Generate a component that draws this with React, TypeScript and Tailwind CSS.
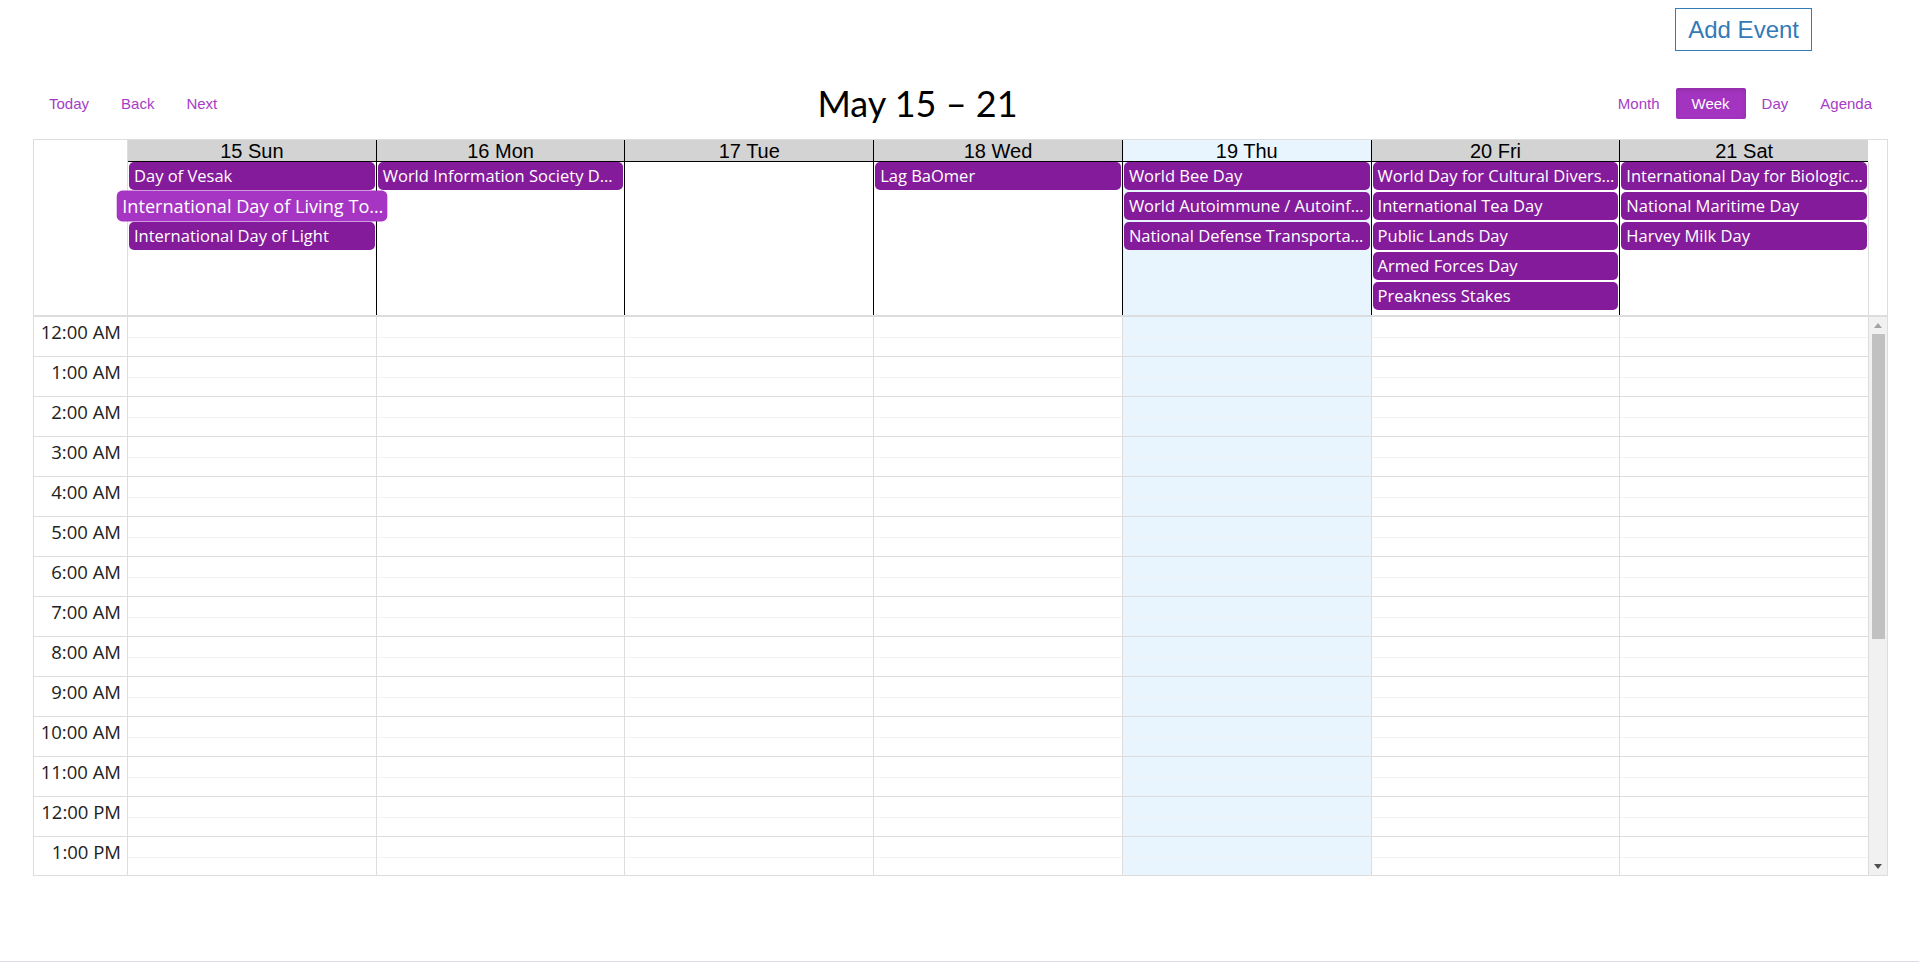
import React from 'react'

interface CalEvent {
  title: string
  label?: string
}

interface DayColumn {
  label: string
  today?: boolean
  events: CalEvent[]
}

// label = text as the calendar shows it once clipped to the cell
const days: DayColumn[] = [
  {
    label: '15 Sun',
    events: [
      { title: 'Day of Vesak' },
      { title: 'International Day of Living Together in Peace', label: 'International Day of Living To…' },
      { title: 'International Day of Light' },
    ],
  },
  {
    label: '16 Mon',
    events: [{ title: 'World Information Society Day', label: 'World Information Society D…' }],
  },
  { label: '17 Tue', events: [] },
  { label: '18 Wed', events: [{ title: 'Lag BaOmer' }] },
  {
    label: '19 Thu',
    today: true,
    events: [
      { title: 'World Bee Day' },
      { title: 'World Autoimmune / Autoinflammatory Arthritis Day', label: 'World Autoimmune / Autoinf…' },
      { title: 'National Defense Transportation Day', label: 'National Defense Transporta…' },
    ],
  },
  {
    label: '20 Fri',
    events: [
      { title: 'World Day for Cultural Diversity for Dialogue and Development', label: 'World Day for Cultural Divers…' },
      { title: 'International Tea Day' },
      { title: 'Public Lands Day' },
      { title: 'Armed Forces Day' },
      { title: 'Preakness Stakes' },
    ],
  },
  {
    label: '21 Sat',
    events: [
      { title: 'International Day for Biological Diversity', label: 'International Day for Biologic…' },
      { title: 'National Maritime Day' },
      { title: 'Harvey Milk Day' },
    ],
  },
]

const hours = [
  '12:00 AM',
  '1:00 AM',
  '2:00 AM',
  '3:00 AM',
  '4:00 AM',
  '5:00 AM',
  '6:00 AM',
  '7:00 AM',
  '8:00 AM',
  '9:00 AM',
  '10:00 AM',
  '11:00 AM',
  '12:00 PM',
  '1:00 PM',
]

const highlighted = 'International Day of Living Together in Peace'

function ToolbarButton({ label, active }: { label: string; active?: boolean }) {
  return (
    <button
      className={
        active
          ? 'px-4 py-[7px] text-[15px] leading-[17px] bg-[#a234bf] text-white rounded-[2px] shadow-[inset_0_2px_4px_rgba(0,0,0,0.12)]'
          : 'px-4 py-[7px] text-[15px] leading-[17px] text-[#a63cc6]'
      }
    >
      {label}
    </button>
  )
}

function AllDayEvent({ event }: { event: CalEvent }) {
  const isHot = event.title === highlighted
  return (
    <div
      className={
        isHot
          ? 'relative z-10 h-[28px] mb-[2px] scale-110 rounded-[5px] bg-[#a535c2] px-[5px] text-white text-[16.5px] leading-[28px] whitespace-nowrap overflow-hidden'
          : 'h-[28px] mb-[2px] rounded-[5px] bg-[#841b9b] px-[5px] text-white text-[16.5px] leading-[28px] whitespace-nowrap overflow-hidden'
      }
      title={event.title}
    >
      {event.label ?? event.title}
    </div>
  )
}

export default function App() {
  return (
    <div className="h-[962px] flex flex-col bg-white overflow-hidden font-['Liberation_Sans',Arial,sans-serif]">
      <div className="flex justify-end pt-[8px] pr-[107px]">
        <button className="border border-[#337ab7] px-3 py-[7px] text-[24px] leading-[27px] text-[#337ab7]">
          Add Event
        </button>
      </div>

      <div className="ml-[33px] w-[1855px] mt-[27px] mb-[11px] h-[50px] flex items-center">
        <div className="flex">
          <ToolbarButton label="Today" />
          <ToolbarButton label="Back" />
          <ToolbarButton label="Next" />
        </div>
        <div className="flex-1 text-center text-[36px] leading-[50px] text-black font-['Lato',sans-serif]">
          May 15 – 21
        </div>
        <div className="flex">
          <ToolbarButton label="Month" />
          <ToolbarButton label="Week" active />
          <ToolbarButton label="Day" />
          <ToolbarButton label="Agenda" />
        </div>
      </div>

      <div className="ml-[33px] w-[1855px] border border-[#ddd] font-['Open_Sans',sans-serif]">
        {/* header + all day */}
        <div className="flex h-[175px]">
          <div className="w-[94px] border-r border-[#ddd]" />
          {days.map((day, i) => (
            <div
              key={day.label}
              className={`flex-1 min-w-0 flex flex-col ${i > 0 ? 'border-l border-black' : ''} ${
                day.today ? 'bg-[#e9f5fe]' : ''
              }`}
            >
              <div
                className={`h-[22px] pt-[1px] border-b border-black text-center text-[20px] leading-[20px] text-black font-['Liberation_Sans',Arial,sans-serif] ${
                  day.today ? 'bg-[#e9f5fe]' : 'bg-[#d3d3d3]'
                }`}
              >
                {day.label}
              </div>
              <div className="flex-1 px-[1px]">
                {day.events.map((ev) => (
                  <AllDayEvent key={ev.title} event={ev} />
                ))}
              </div>
            </div>
          ))}
          <div className="w-[19px] flex flex-col">
            <div className="h-[22px]" />
            <div className="flex-1 border-l border-[#ddd]" />
          </div>
        </div>

        {/* time grid */}
        <div className="flex h-[560px] border-t-2 border-[#ddd] overflow-hidden">
          <div className="w-[94px] border-r border-[#ddd]">
            {hours.map((h) => (
              <div
                key={h}
                className="h-[40px] shrink-0 border-b border-[#ddd] pr-[6px] pt-[5px] text-right text-[18.5px] leading-[20px] text-[#222]"
              >
                {h}
              </div>
            ))}
          </div>
          {days.map((day, i) => (
            <div
              key={day.label}
              className={`flex-1 min-w-0 ${i > 0 ? 'border-l border-[#ddd]' : ''} ${
                day.today ? 'bg-[#e9f5fe]' : ''
              }`}
            >
              {hours.map((h) => (
                <div key={h} className="h-[40px] border-b border-[#ddd]">
                  <div className="h-[21px] border-b border-[#f3f3f3]" />
                </div>
              ))}
            </div>
          ))}
          {/* scrollbar */}
          <div className="w-[19px] border-l border-[#ddd] bg-[#f1f1f1] flex flex-col items-center">
            <div className="h-[17px] flex items-center justify-center">
              <svg width="8" height="5" viewBox="0 0 8 5">
                <polygon points="4,0 8,5 0,5" fill="#a3a3a3" />
              </svg>
            </div>
            <div className="w-[13px] h-[305px] bg-[#c1c1c1]" />
            <div className="flex-1" />
            <div className="h-[17px] flex items-center justify-center">
              <svg width="8" height="5" viewBox="0 0 8 5">
                <polygon points="0,0 8,0 4,5" fill="#505050" />
              </svg>
            </div>
          </div>
        </div>
      </div>

      <div className="flex-1" />
      <div className="h-px bg-[#dadce3]" />
    </div>
  )
}
